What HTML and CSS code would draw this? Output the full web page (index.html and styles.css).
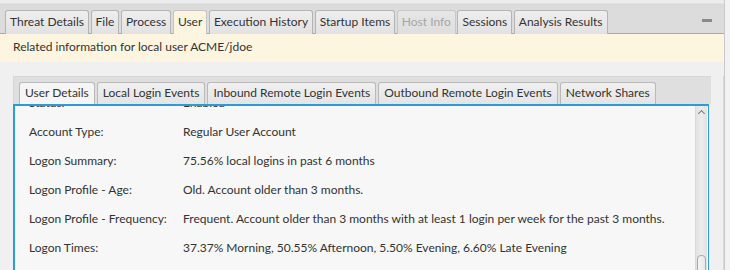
FILE: index.html
```html
<!DOCTYPE html>
<html>
<head>
<meta charset="utf-8">
<link rel="stylesheet" href="styles.css">
</head>
<body>
<div class="window">
  <div class="outer">
    <div class="outer-header">
      <div class="tabs">
        <div class="tab">Threat Details</div>
        <div class="tab">File</div>
        <div class="tab">Process</div>
        <div class="tab tab-selected">User</div>
        <div class="tab">Execution History</div>
        <div class="tab">Startup Items</div>
        <div class="tab tab-disabled">Host Info</div>
        <div class="tab">Sessions</div>
        <div class="tab">Analysis Results</div>
      </div>
      <div class="minimize"></div>
    </div>
    <div class="band">Related information for local user ACME/jdoe</div>
    <div class="outer-body">
      <div class="inner">
        <div class="inner-header">
          <div class="itab itab-selected">User Details</div>
          <div class="itab">Local Login Events</div>
          <div class="itab">Inbound Remote Login Events</div>
          <div class="itab">Outbound Remote Login Events</div>
          <div class="itab">Network Shares</div>
        </div>
        <div class="inner-content">
          <div class="rows">
            <div class="row"><span class="label">Status:</span><span class="value">Enabled</span></div>
            <div class="row"><span class="label">Account Type:</span><span class="value">Regular User Account</span></div>
            <div class="row"><span class="label">Logon Summary:</span><span class="value">75.56% local logins in past 6 months</span></div>
            <div class="row"><span class="label">Logon Profile - Age:</span><span class="value">Old. Account older than 3 months.</span></div>
            <div class="row"><span class="label">Logon Profile - Frequency:</span><span class="value">Frequent. Account older than 3 months with at least 1 login per week for the past 3 months.</span></div>
            <div class="row"><span class="label">Logon Times:</span><span class="value">37.37% Morning, 50.55% Afternoon, 5.50% Evening, 6.60% Late Evening</span></div>
          </div>
          <div class="vscroll">
            <div class="arrow-up"></div>
            <div class="thumb"></div>
          </div>
        </div>
      </div>
      <div class="outer-edge"></div>
    </div>
  </div>
  <div class="win-edge"></div>
</div>
</body>
</html>
```

FILE: styles.css
```css
* { box-sizing: border-box; }
html, body {
  margin: 0;
  padding: 0;
  background: #f0f0f0;
}
body {
  font-family: "Lato", "Open Sans", sans-serif;
  font-size: 12px;
  color: #333;
}
.window {
  display: flex;
  width: 730px;
  height: 270px;
  overflow: hidden;
}
.outer {
  width: 725px;
  display: flex;
  flex-direction: column;
  border-right: 1px solid #c9c9c9;
}
.win-edge {
  flex: 1;
  background: #f2f2f2;
}
.outer-header {
  height: 34px;
  padding: 10px 0 0 5px;
  display: flex;
  align-items: flex-start;
  justify-content: space-between;
  background: linear-gradient(#ececec 0, #ececec 3px, #d9d9d9 4px, #dcdcdc 9px, #dcdcdc 100%);
  border-bottom: 1px solid #aaaaaa;
}
.tabs {
  display: flex;
  gap: 1.6px;
}
.tab {
  height: 24px;
  margin-bottom: -1px;
  padding: 3px 4px 0;
  border: 1px solid #b4b4b4;
  border-bottom: none;
  border-radius: 3px 3px 0 0;
  background: linear-gradient(#eeeeee, #e2e2e2);
  white-space: nowrap;
  color: #333;
}
.tab-selected {
  background: #fef5e0;
  border-color: #c4c4c4;
  height: 24px;
  position: relative;
  z-index: 1;
}
.tab-disabled {
  color: #a6a6a6;
  background: linear-gradient(#e6e6e6, #dedede);
  border-color: #c8c8c8;
}
.minimize {
  width: 10px;
  height: 3px;
  background: #8a8a8a;
  margin: 9px 12px 0 0;
}
.band {
  height: 28px;
  background: #fef5e0;
  padding: 5px 0 0 13px;
  white-space: nowrap;
}
.outer-body {
  flex: 1;
  display: flex;
  padding: 14px 0 0 13px;
}
.inner {
  width: 698px;
  display: flex;
  flex-direction: column;
}
.inner-header {
  height: 28px;
  background: #dfdfdf;
  border-top: 1px solid #d6d6d6;
  border-left: 1px solid #d6d6d6;
  padding: 5px 0 0 5px;
  display: flex;
  gap: 2px;
}
.itab {
  height: 22px;
  padding: 2px 5px 0;
  border: 1px solid #b9b9b9;
  border-bottom: none;
  border-radius: 3px 3px 0 0;
  background: linear-gradient(#f0f0f0, #e4e4e4);
  white-space: nowrap;
}
.itab-selected {
  background: #f5f5f5;
}
.inner-content {
  flex: 1;
  display: flex;
  background: #f7f7f7;
  border: 2px solid #2d9bd5;
  border-bottom: none;
  border-right-width: 1px;
  margin-right: 2px;
  overflow: hidden;
}
.rows {
  flex: 1;
  margin-top: -18px;
  padding-left: 14px;
}
.row {
  height: 29px;
  display: flex;
  align-items: center;
  white-space: nowrap;
}
.label {
  width: 154px;
}
.vscroll {
  width: 12px;
  margin-right: 1px;
  background: linear-gradient(90deg, #e2e2e2, #ececec 50%, #e2e2e2);
  border-left: 1px solid #dadada;
  position: relative;
}
.arrow-up {
  position: absolute;
  left: 3px;
  top: 5px;
  width: 5px;
  height: 5px;
  border-left: 1px solid #7a7a7a;
  border-top: 1px solid #7a7a7a;
  transform: rotate(45deg);
}
.thumb {
  position: absolute;
  left: 1px;
  top: 149px;
  width: 9px;
  height: 40px;
  border: 1px solid #a8a8a8;
  border-radius: 4px;
  background: linear-gradient(90deg, #f4f4f4, #e8e8e8);
}
.outer-edge {
  flex: 1;
  border-right: 1px solid #d8d8d8;
  margin-right: 0;
}
```
